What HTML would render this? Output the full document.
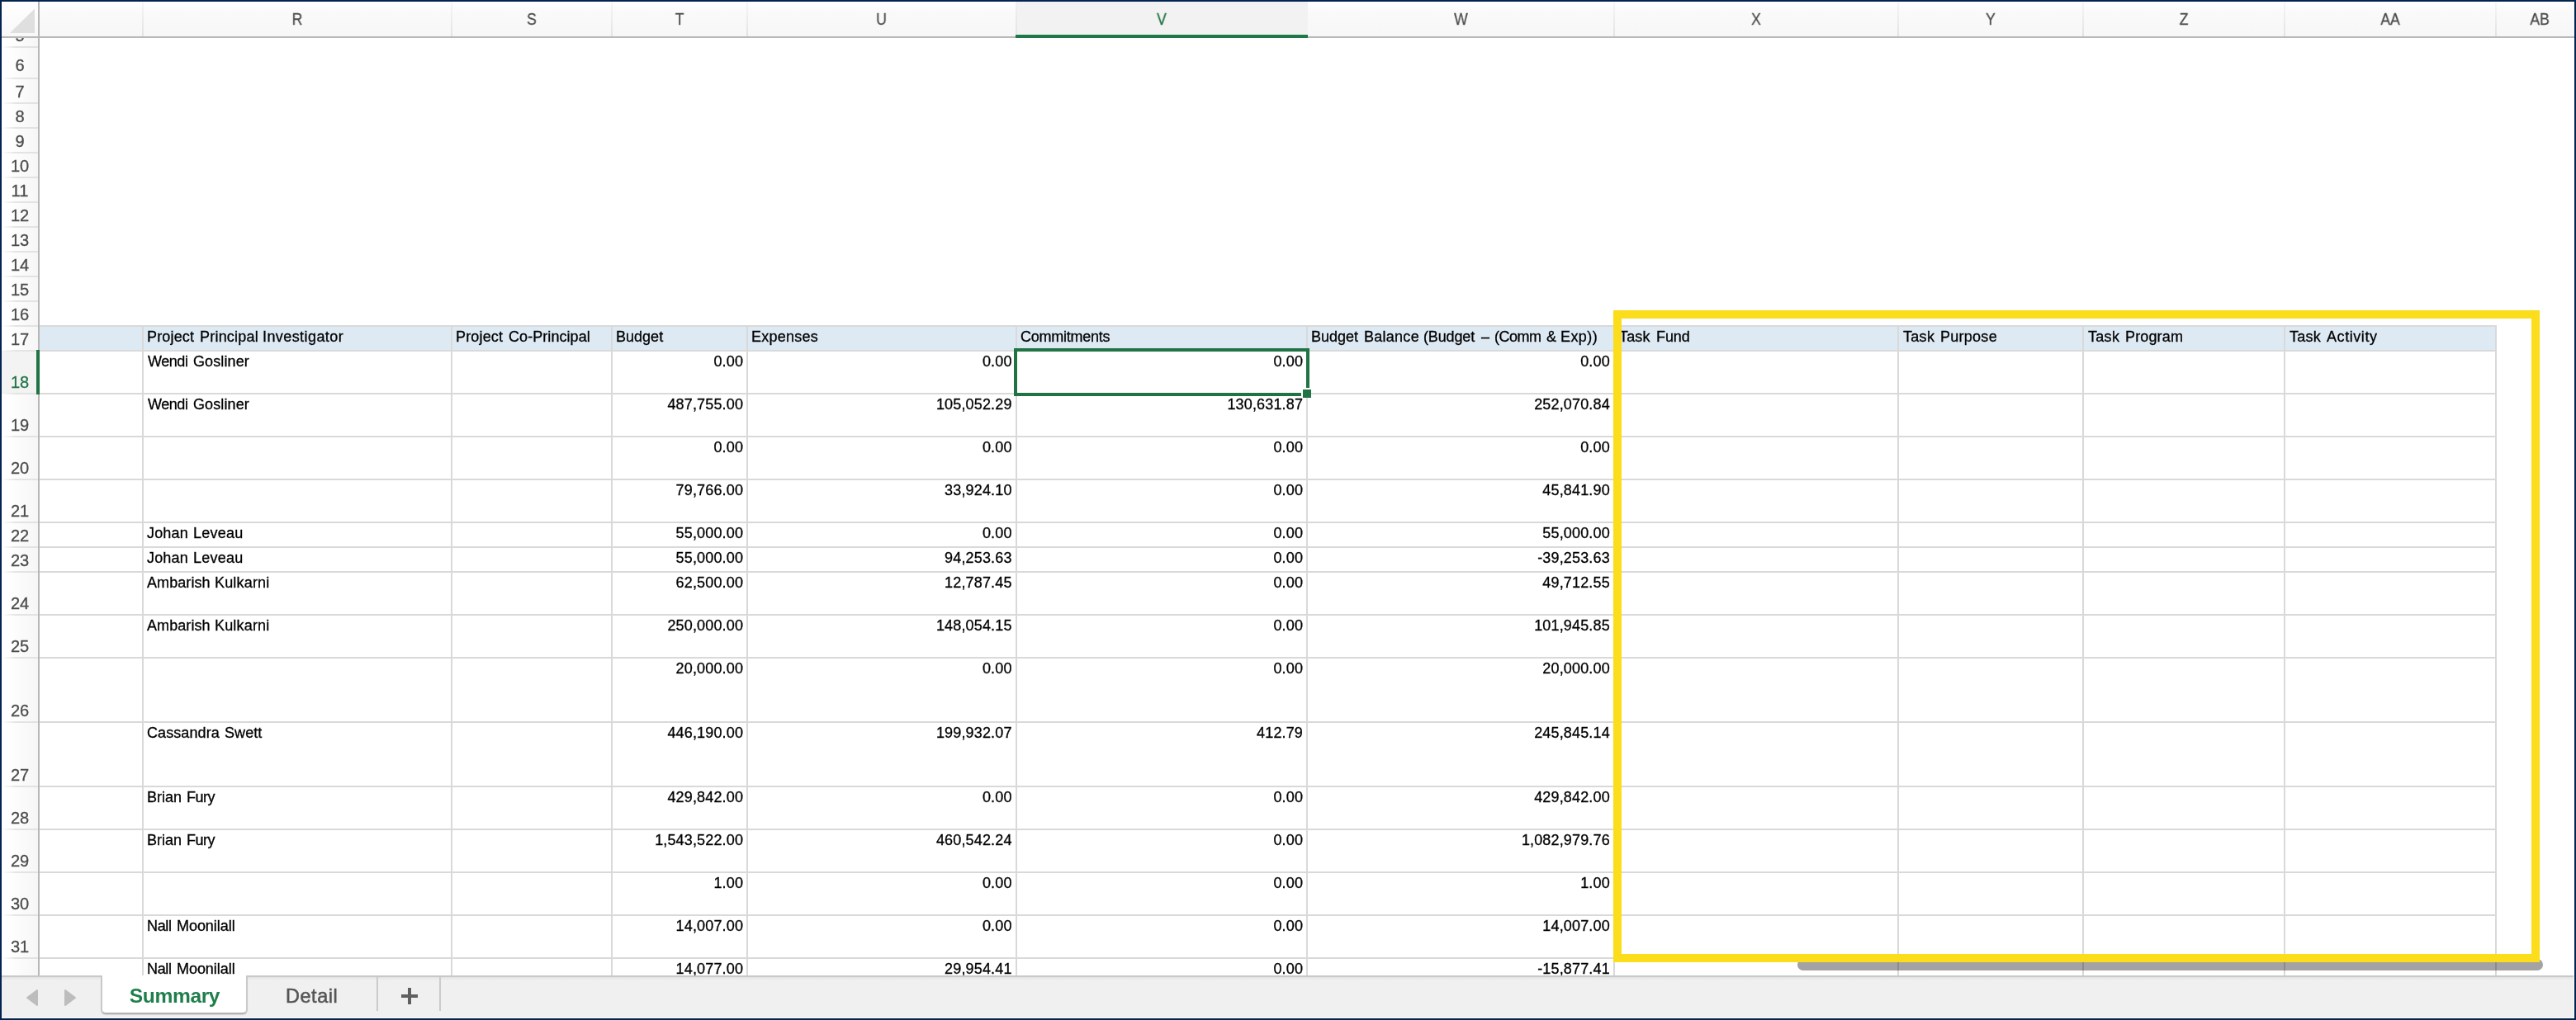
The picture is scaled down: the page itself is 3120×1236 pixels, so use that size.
<!DOCTYPE html>
<html lang="en"><head><meta charset="utf-8"><title>Summary</title>
<style>

html,body{margin:0;padding:0;background:#fff;}
body{width:3120px;height:1236px;overflow:hidden;position:relative;font-family:"Liberation Sans",sans-serif;}
#root{position:absolute;left:0;top:0;width:3120px;height:1236px;overflow:hidden;background:#fff;}
#root div,#root span{position:absolute;box-sizing:border-box;}
#root span{will-change:transform;}
.hl{height:2px;background:#d9d9d9;}
.vl{width:2px;background:#d9d9d9;}
.t{-webkit-text-stroke:0.3px #000;font-size:18px;line-height:20px;height:20px;white-space:pre;color:#000;}
.n{text-align:right;letter-spacing:0.15px;}
.ch{-webkit-text-stroke:0.3px currentColor;font-size:20px;line-height:22px;height:22px;top:12px;color:#4c4c4c;text-align:center;white-space:pre;transform:scaleX(0.88);}
.rh{-webkit-text-stroke:0.3px currentColor;font-size:20px;line-height:22px;height:22px;left:2px;width:44px;color:#4c4c4c;text-align:center;white-space:pre;}
.cd{width:2px;top:3px;height:41px;background:linear-gradient(#f6f6f6,#e3e3e1);}
.rd{left:2px;width:44px;height:2px;background:linear-gradient(90deg,rgba(228,228,226,0),#e4e4e2 40%,#e2e2e0);}

</style></head><body><div id="root">
<div style="left:48px;top:395px;width:2975px;height:30px;background:#deeaf3"></div>
<div class="hl" style="left:48px;top:394px;width:2976px"></div>
<div class="hl" style="left:48px;top:424px;width:2976px"></div>
<div class="hl" style="left:48px;top:476px;width:2976px"></div>
<div class="hl" style="left:48px;top:528px;width:2976px"></div>
<div class="hl" style="left:48px;top:580px;width:2976px"></div>
<div class="hl" style="left:48px;top:632px;width:2976px"></div>
<div class="hl" style="left:48px;top:662px;width:2976px"></div>
<div class="hl" style="left:48px;top:692px;width:2976px"></div>
<div class="hl" style="left:48px;top:744px;width:2976px"></div>
<div class="hl" style="left:48px;top:796px;width:2976px"></div>
<div class="hl" style="left:48px;top:874px;width:2976px"></div>
<div class="hl" style="left:48px;top:952px;width:2976px"></div>
<div class="hl" style="left:48px;top:1004px;width:2976px"></div>
<div class="hl" style="left:48px;top:1056px;width:2976px"></div>
<div class="hl" style="left:48px;top:1108px;width:2976px"></div>
<div class="hl" style="left:48px;top:1160px;width:2976px"></div>
<div class="vl" style="left:172px;top:394px;height:788px"></div>
<div class="vl" style="left:546px;top:394px;height:788px"></div>
<div class="vl" style="left:740px;top:394px;height:788px"></div>
<div class="vl" style="left:904px;top:394px;height:788px"></div>
<div class="vl" style="left:1230px;top:394px;height:788px"></div>
<div class="vl" style="left:1582px;top:394px;height:788px"></div>
<div class="vl" style="left:1954px;top:394px;height:788px"></div>
<div class="vl" style="left:2298px;top:394px;height:788px"></div>
<div class="vl" style="left:2522px;top:394px;height:788px"></div>
<div class="vl" style="left:2766px;top:394px;height:788px"></div>
<div class="vl" style="left:3022px;top:394px;height:788px"></div>
<span class="t" style="left:0;top:398px"><span style="left:177.60px;top:0;letter-spacing:0.167px">Project </span><span style="left:241.60px;top:0;letter-spacing:0.213px">Principal </span><span style="left:318.00px;top:0;letter-spacing:0.418px">Investigator</span></span>
<span class="t" style="left:0;top:398px"><span style="left:551.70px;top:0;letter-spacing:0.167px">Project </span><span style="left:615.50px;top:0;letter-spacing:0.064px">Co-Principal</span></span>
<span class="t" style="left:0;top:398px"><span style="left:745.80px;top:0;letter-spacing:0.020px">Budget</span></span>
<span class="t" style="left:0;top:398px"><span style="left:909.60px;top:0;letter-spacing:0.243px">Expenses</span></span>
<span class="t" style="left:0;top:398px"><span style="left:1235.75px;top:0;letter-spacing:-0.250px">Commitments</span></span>
<span class="t" style="left:0;top:398px"><span style="left:1587.60px;top:0;letter-spacing:0.000px">Budget </span><span style="left:1651.60px;top:0;letter-spacing:0.267px">Balance </span><span style="left:1724.30px;top:0;letter-spacing:-0.133px">(Budget </span><span style="left:1794.20px;top:0;letter-spacing:0.000px">– </span><span style="left:1810.30px;top:0;letter-spacing:-0.525px">(Comm </span><span style="left:1872.80px;top:0;letter-spacing:0.000px">&amp; </span><span style="left:1890.00px;top:0;letter-spacing:0.425px">Exp))</span></span>
<span class="t" style="left:0;top:398px"><span style="left:1960.90px;top:0;letter-spacing:0.167px">Task </span><span style="left:2005.80px;top:0;letter-spacing:-0.067px">Fund</span></span>
<span class="t" style="left:0;top:398px"><span style="left:2304.60px;top:0;letter-spacing:0.300px">Task </span><span style="left:2349.80px;top:0;letter-spacing:0.267px">Purpose</span></span>
<span class="t" style="left:0;top:398px"><span style="left:2528.50px;top:0;letter-spacing:0.300px">Task </span><span style="left:2573.50px;top:0;letter-spacing:0.150px">Program</span></span>
<span class="t" style="left:0;top:398px"><span style="left:2772.75px;top:0;letter-spacing:0.217px">Task </span><span style="left:2818.00px;top:0;letter-spacing:0.571px">Activity</span></span>
<span class="t" style="left:0;top:428px"><span style="left:178.60px;top:0;letter-spacing:-0.450px">Wendi </span><span style="left:233.90px;top:0;letter-spacing:0.114px">Gosliner</span></span>
<span class="t n" style="left:741px;top:428px;width:159.05px">0.00</span>
<span class="t n" style="left:905px;top:428px;width:320.55px">0.00</span>
<span class="t n" style="left:1230px;top:428px;width:348.05px">0.00</span>
<span class="t n" style="left:1584px;top:428px;width:365.80px">0.00</span>
<span class="t" style="left:0;top:480px"><span style="left:178.60px;top:0;letter-spacing:-0.450px">Wendi </span><span style="left:233.90px;top:0;letter-spacing:0.114px">Gosliner</span></span>
<span class="t n" style="left:741px;top:480px;width:159.05px">487,755.00</span>
<span class="t n" style="left:905px;top:480px;width:320.55px">105,052.29</span>
<span class="t n" style="left:1230px;top:480px;width:348.05px">130,631.87</span>
<span class="t n" style="left:1584px;top:480px;width:365.80px">252,070.84</span>
<span class="t n" style="left:741px;top:532px;width:159.05px">0.00</span>
<span class="t n" style="left:905px;top:532px;width:320.55px">0.00</span>
<span class="t n" style="left:1230px;top:532px;width:348.05px">0.00</span>
<span class="t n" style="left:1584px;top:532px;width:365.80px">0.00</span>
<span class="t n" style="left:741px;top:584px;width:159.05px">79,766.00</span>
<span class="t n" style="left:905px;top:584px;width:320.55px">33,924.10</span>
<span class="t n" style="left:1230px;top:584px;width:348.05px">0.00</span>
<span class="t n" style="left:1584px;top:584px;width:365.80px">45,841.90</span>
<span class="t" style="left:0;top:636px"><span style="left:178.10px;top:0;letter-spacing:0.175px">Johan </span><span style="left:233.90px;top:0;letter-spacing:0.260px">Leveau</span></span>
<span class="t n" style="left:741px;top:636px;width:159.05px">55,000.00</span>
<span class="t n" style="left:905px;top:636px;width:320.55px">0.00</span>
<span class="t n" style="left:1230px;top:636px;width:348.05px">0.00</span>
<span class="t n" style="left:1584px;top:636px;width:365.80px">55,000.00</span>
<span class="t" style="left:0;top:666px"><span style="left:178.10px;top:0;letter-spacing:0.175px">Johan </span><span style="left:233.90px;top:0;letter-spacing:0.260px">Leveau</span></span>
<span class="t n" style="left:741px;top:666px;width:159.05px">55,000.00</span>
<span class="t n" style="left:905px;top:666px;width:320.55px">94,253.63</span>
<span class="t n" style="left:1230px;top:666px;width:348.05px">0.00</span>
<span class="t n" style="left:1584px;top:666px;width:365.80px">-39,253.63</span>
<span class="t" style="left:0;top:696px"><span style="left:177.70px;top:0;letter-spacing:0.086px">Ambarish </span><span style="left:260.00px;top:0;letter-spacing:0.171px">Kulkarni</span></span>
<span class="t n" style="left:741px;top:696px;width:159.05px">62,500.00</span>
<span class="t n" style="left:905px;top:696px;width:320.55px">12,787.45</span>
<span class="t n" style="left:1230px;top:696px;width:348.05px">0.00</span>
<span class="t n" style="left:1584px;top:696px;width:365.80px">49,712.55</span>
<span class="t" style="left:0;top:748px"><span style="left:177.70px;top:0;letter-spacing:0.086px">Ambarish </span><span style="left:260.00px;top:0;letter-spacing:0.171px">Kulkarni</span></span>
<span class="t n" style="left:741px;top:748px;width:159.05px">250,000.00</span>
<span class="t n" style="left:905px;top:748px;width:320.55px">148,054.15</span>
<span class="t n" style="left:1230px;top:748px;width:348.05px">0.00</span>
<span class="t n" style="left:1584px;top:748px;width:365.80px">101,945.85</span>
<span class="t n" style="left:741px;top:800px;width:159.05px">20,000.00</span>
<span class="t n" style="left:905px;top:800px;width:320.55px">0.00</span>
<span class="t n" style="left:1230px;top:800px;width:348.05px">0.00</span>
<span class="t n" style="left:1584px;top:800px;width:365.80px">20,000.00</span>
<span class="t" style="left:0;top:878px"><span style="left:177.90px;top:0;letter-spacing:0.088px">Cassandra </span><span style="left:271.80px;top:0;letter-spacing:0.075px">Swett</span></span>
<span class="t n" style="left:741px;top:878px;width:159.05px">446,190.00</span>
<span class="t n" style="left:905px;top:878px;width:320.55px">199,932.07</span>
<span class="t n" style="left:1230px;top:878px;width:348.05px">412.79</span>
<span class="t n" style="left:1584px;top:878px;width:365.80px">245,845.14</span>
<span class="t" style="left:0;top:956px"><span style="left:177.90px;top:0;letter-spacing:0.025px">Brian </span><span style="left:226.10px;top:0;letter-spacing:-0.467px">Fury</span></span>
<span class="t n" style="left:741px;top:956px;width:159.05px">429,842.00</span>
<span class="t n" style="left:905px;top:956px;width:320.55px">0.00</span>
<span class="t n" style="left:1230px;top:956px;width:348.05px">0.00</span>
<span class="t n" style="left:1584px;top:956px;width:365.80px">429,842.00</span>
<span class="t" style="left:0;top:1008px"><span style="left:177.90px;top:0;letter-spacing:0.025px">Brian </span><span style="left:226.10px;top:0;letter-spacing:-0.467px">Fury</span></span>
<span class="t n" style="left:741px;top:1008px;width:159.05px">1,543,522.00</span>
<span class="t n" style="left:905px;top:1008px;width:320.55px">460,542.24</span>
<span class="t n" style="left:1230px;top:1008px;width:348.05px">0.00</span>
<span class="t n" style="left:1584px;top:1008px;width:365.80px">1,082,979.76</span>
<span class="t n" style="left:741px;top:1060px;width:159.05px">1.00</span>
<span class="t n" style="left:905px;top:1060px;width:320.55px">0.00</span>
<span class="t n" style="left:1230px;top:1060px;width:348.05px">0.00</span>
<span class="t n" style="left:1584px;top:1060px;width:365.80px">1.00</span>
<span class="t" style="left:0;top:1112px"><span style="left:177.90px;top:0;letter-spacing:-0.333px">Nall </span><span style="left:213.70px;top:0;letter-spacing:-0.050px">Moonilall</span></span>
<span class="t n" style="left:741px;top:1112px;width:159.05px">14,007.00</span>
<span class="t n" style="left:905px;top:1112px;width:320.55px">0.00</span>
<span class="t n" style="left:1230px;top:1112px;width:348.05px">0.00</span>
<span class="t n" style="left:1584px;top:1112px;width:365.80px">14,007.00</span>
<span class="t" style="left:0;top:1164px"><span style="left:177.90px;top:0;letter-spacing:-0.333px">Nall </span><span style="left:213.70px;top:0;letter-spacing:-0.050px">Moonilall</span></span>
<span class="t n" style="left:741px;top:1164px;width:159.05px">14,077.00</span>
<span class="t n" style="left:905px;top:1164px;width:320.55px">29,954.41</span>
<span class="t n" style="left:1230px;top:1164px;width:348.05px">0.00</span>
<span class="t n" style="left:1584px;top:1164px;width:365.80px">-15,877.41</span>
<div style="left:1228px;top:422px;width:358px;height:58px;border:4px solid #217346"></div>
<div style="left:1576px;top:470px;width:12px;height:12px;background:#fff"></div>
<div style="left:1578px;top:472px;width:10px;height:10px;background:#217346"></div>
<div style="left:2177px;top:1162px;width:903px;height:14px;border-radius:7px;background:rgba(0,0,0,0.36)"></div>
<div style="left:1954px;top:376px;width:1122px;height:790px;border:10px solid #fbdd1b"></div>
<div style="left:0;top:1182px;width:3120px;height:54px;background:#f0f0f0;border-top:2px solid #c8c8c8"></div>
<div style="left:0;top:1184px;width:3120px;height:4px;background:linear-gradient(#e2e2e2,#f0f0f0)"></div>
<div style="left:456px;top:1184px;width:2px;height:41px;background:#cbcbcb"></div>
<div style="left:532px;top:1184px;width:2px;height:41px;background:#cbcbcb"></div>
<div style="left:122px;top:1182px;width:178px;height:47px;background:#fff;border:2px solid #c9c9c9;border-top:none;border-bottom:2px solid #b4b4b4;border-radius:0 0 6px 6px;box-shadow:0 1px 1px rgba(0,0,0,0.12)"></div>
<span style="left:123.9px;top:1192.1px;width:175px;text-align:center;font-size:24.6px;letter-spacing:-0.4px;line-height:30px;font-weight:bold;color:#1f7f4c;white-space:pre">Summary</span>
<span style="left:346.1px;top:1192.0px;font-size:23.4px;line-height:30px;color:#555;-webkit-text-stroke:0.55px #555;letter-spacing:0.6px;white-space:pre">Detail</span>
<div style="left:486px;top:1205px;width:20px;height:4px;background:#606060"></div>
<div style="left:494px;top:1197px;width:4px;height:20px;background:#606060"></div>
<svg style="position:absolute;left:30px;top:1197px" width="66" height="24" viewBox="0 0 66 24"><path d="M15 3 L15 21 L3 12 Z" fill="#bdbdbd" stroke="#bdbdbd" stroke-width="2" stroke-linejoin="round"/><path d="M49 3 L49 21 L61 12 Z" fill="#bdbdbd" stroke="#bdbdbd" stroke-width="2" stroke-linejoin="round"/></svg>
<div style="left:0;top:0;width:3120px;height:44px;background:linear-gradient(#ffffff 8%,#fafafa 30%,#f7f7f7)"></div>
<div style="left:1230px;top:2px;width:354px;height:39px;background:#f2f2f2"></div>
<div style="left:1230px;top:41px;width:354px;height:1px;background:#fdfdfd"></div>
<div style="left:1230px;top:3px;width:2px;height:38px;background:linear-gradient(#f0f0f0,#e4e4e2)"></div>
<div style="left:0;top:44px;width:3120px;height:2px;background:#b9b9b9"></div>
<div style="left:1230px;top:42px;width:354px;height:4px;background:#1f7848"></div>
<div class="cd" style="left:172px"></div>
<div class="cd" style="left:546px"></div>
<div class="cd" style="left:740px"></div>
<div class="cd" style="left:904px"></div>
<div class="cd" style="left:1954px"></div>
<div class="cd" style="left:2298px"></div>
<div class="cd" style="left:2522px"></div>
<div class="cd" style="left:2766px"></div>
<div class="cd" style="left:3022px"></div>
<span class="ch" style="left:173px;width:374px">R</span>
<span class="ch" style="left:547px;width:194px">S</span>
<span class="ch" style="left:741px;width:164px">T</span>
<span class="ch" style="left:905px;width:325px">U</span>
<span class="ch" style="left:1230px;width:354px;color:#217346">V</span>
<span class="ch" style="left:1584px;width:371px">W</span>
<span class="ch" style="left:1955px;width:344px">X</span>
<span class="ch" style="left:2299px;width:224px">Y</span>
<span class="ch" style="left:2523px;width:244px">Z</span>
<span class="ch" style="left:2767px;width:256px">AA</span>
<span class="ch" style="left:3023px;width:106px">AB</span>
<div style="left:0;top:46px;width:46px;height:1136px;background:linear-gradient(90deg,#ffffff 20%,#f6f6f6)"></div>
<div style="left:2px;top:425px;width:44px;height:52px;background:#f3f3f3"></div>
<div class="rd" style="top:56px"></div>
<div class="rd" style="top:94px"></div>
<div class="rd" style="top:124px"></div>
<div class="rd" style="top:154px"></div>
<div class="rd" style="top:184px"></div>
<div class="rd" style="top:214px"></div>
<div class="rd" style="top:244px"></div>
<div class="rd" style="top:274px"></div>
<div class="rd" style="top:304px"></div>
<div class="rd" style="top:334px"></div>
<div class="rd" style="top:364px"></div>
<div class="rd" style="top:394px"></div>
<div class="rd" style="top:424px"></div>
<div class="rd" style="top:476px"></div>
<div class="rd" style="top:528px"></div>
<div class="rd" style="top:580px"></div>
<div class="rd" style="top:632px"></div>
<div class="rd" style="top:662px"></div>
<div class="rd" style="top:692px"></div>
<div class="rd" style="top:744px"></div>
<div class="rd" style="top:796px"></div>
<div class="rd" style="top:874px"></div>
<div class="rd" style="top:952px"></div>
<div class="rd" style="top:1004px"></div>
<div class="rd" style="top:1056px"></div>
<div class="rd" style="top:1108px"></div>
<div class="rd" style="top:1160px"></div>
<div style="left:46px;top:46px;width:2px;height:1136px;background:#b7b7b7"></div>
<div style="left:44px;top:424px;width:4px;height:54px;background:#217346"></div>
<div style="left:0;top:46px;width:48px;height:1136px;overflow:hidden">
<span class="rh" style="top:-14.5px">5</span>
<span class="rh" style="top:22.0px">6</span>
<span class="rh" style="top:53.5px">7</span>
<span class="rh" style="top:83.5px">8</span>
<span class="rh" style="top:113.5px">9</span>
<span class="rh" style="top:143.5px">10</span>
<span class="rh" style="top:173.5px">11</span>
<span class="rh" style="top:203.5px">12</span>
<span class="rh" style="top:233.5px">13</span>
<span class="rh" style="top:263.5px">14</span>
<span class="rh" style="top:293.5px">15</span>
<span class="rh" style="top:323.5px">16</span>
<span class="rh" style="top:353.5px">17</span>
<span class="rh" style="top:405.5px;color:#217346">18</span>
<span class="rh" style="top:457.5px">19</span>
<span class="rh" style="top:509.5px">20</span>
<span class="rh" style="top:561.5px">21</span>
<span class="rh" style="top:591.5px">22</span>
<span class="rh" style="top:621.5px">23</span>
<span class="rh" style="top:673.5px">24</span>
<span class="rh" style="top:725.5px">25</span>
<span class="rh" style="top:803.5px">26</span>
<span class="rh" style="top:881.5px">27</span>
<span class="rh" style="top:933.5px">28</span>
<span class="rh" style="top:985.5px">29</span>
<span class="rh" style="top:1037.5px">30</span>
<span class="rh" style="top:1089.5px">31</span>
</div>
<div style="left:2px;top:2px;width:44px;height:42px;background:linear-gradient(#ffffff,#f8f8f8)"></div>
<div style="left:46px;top:2px;width:2px;height:44px;background:#b7b7b7"></div>
<svg style="position:absolute;left:10px;top:8px" width="34" height="34" viewBox="0 0 34 34"><path d="M32 2.5 L32 32 L2 32 Z" fill="#dfdfdf"/></svg>
<div style="left:0;top:0;width:3120px;height:2px;background:#03244d"></div>
<div style="left:0;top:0;width:2px;height:1236px;background:#03244d"></div>
<div style="left:3118px;top:0;width:2px;height:1236px;background:#03244d"></div>
<div style="left:2px;top:1233px;width:3116px;height:1px;background:#fdfdfb"></div>
<div style="left:3117px;top:1182px;width:1px;height:54px;background:#fdfdfb"></div>
<div style="left:0;top:1234px;width:3120px;height:2px;background:#03244d"></div>
</div></body></html>
